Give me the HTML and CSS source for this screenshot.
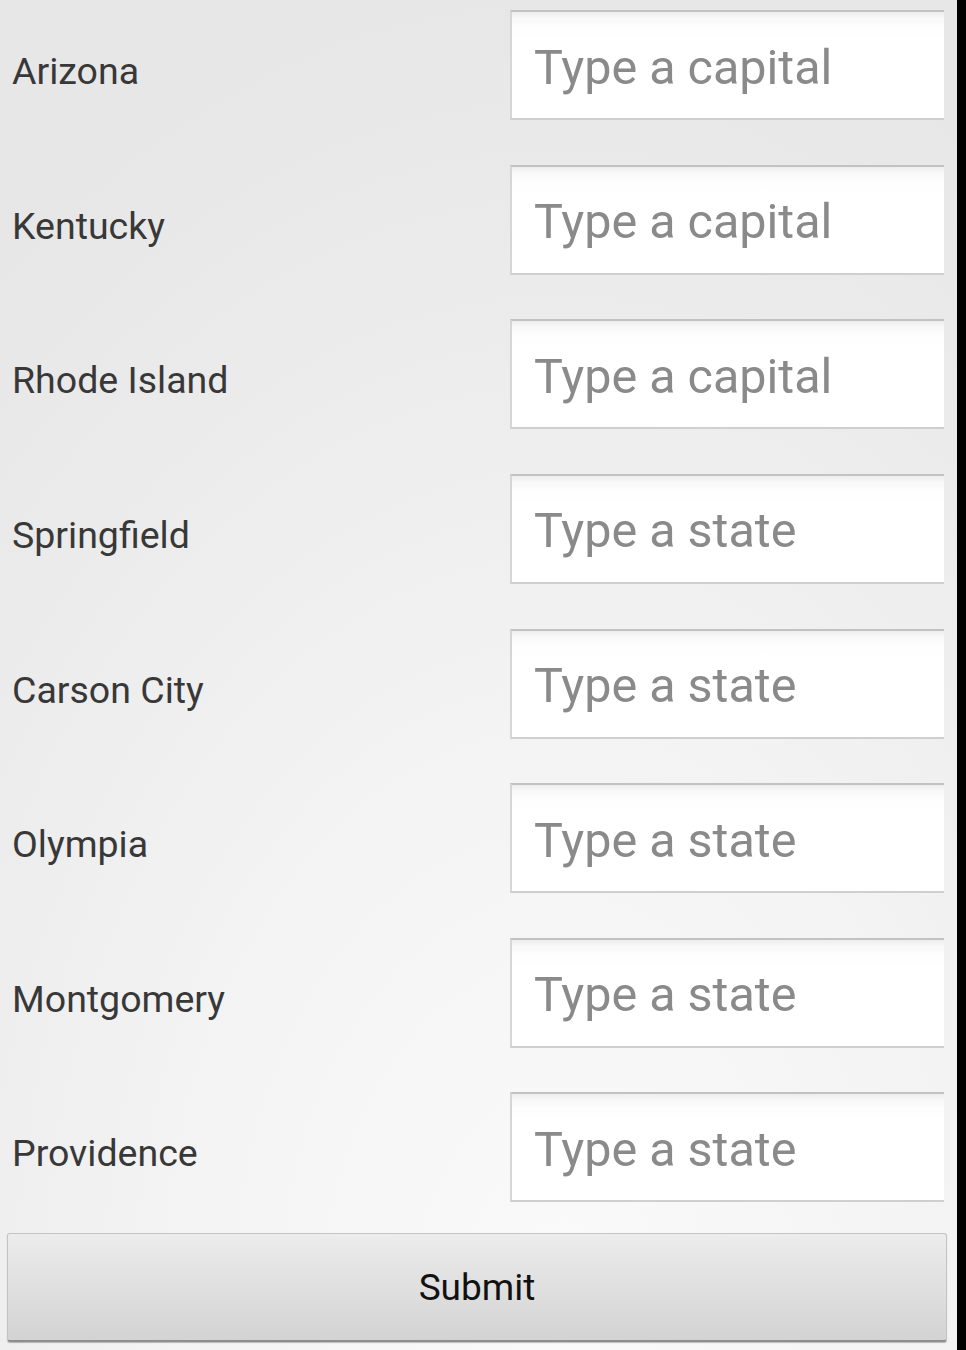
FILE: index.html
```html
<!DOCTYPE html>
<html>
<head>
<meta charset="utf-8">
<link rel="stylesheet" href="styles.css">
</head>
<body>
<div class="device">
  <div class="screen">
    <form class="quiz">
      <div class="row"><label class="name">Arizona</label><input class="field" type="text" placeholder="Type a capital"></div>
      <div class="row"><label class="name">Kentucky</label><input class="field" type="text" placeholder="Type a capital"></div>
      <div class="row"><label class="name">Rhode Island</label><input class="field" type="text" placeholder="Type a capital"></div>
      <div class="row"><label class="name">Springfield</label><input class="field" type="text" placeholder="Type a state"></div>
      <div class="row"><label class="name">Carson City</label><input class="field" type="text" placeholder="Type a state"></div>
      <div class="row"><label class="name">Olympia</label><input class="field" type="text" placeholder="Type a state"></div>
      <div class="row"><label class="name">Montgomery</label><input class="field" type="text" placeholder="Type a state"></div>
      <div class="row"><label class="name">Providence</label><input class="field" type="text" placeholder="Type a state"></div>
      <button class="submit" type="button">Submit</button>
    </form>
  </div>
  <div class="edge"></div>
</div>
</body>
</html>
```
FILE: styles.css
```css
html, body {
  margin: 0;
  padding: 0;
}
body {
  width: 966px;
  height: 1350px;
  overflow: hidden;
  font-family: Roboto, "Liberation Sans", sans-serif;
}
.device {
  display: flex;
  width: 966px;
  height: 1350px;
}
.screen {
  width: 957px;
  height: 1350px;
  background: radial-gradient(ellipse 900px 1300px at 560px 1300px, #fafafa 0%, #f4f4f4 40%, #ececec 75%, #e7e7e7 100%);
}
.edge {
  width: 9px;
  height: 1350px;
  background: #000;
}
.quiz {
  display: flex;
  flex-direction: column;
  padding: 10px 0 0 0;
}
.row {
  display: flex;
  align-items: center;
  height: 110px;
  margin-bottom: 44.65px;
}
.row:nth-last-of-type(1) {
  margin-bottom: 0;
}
.name {
  width: 510px;
  box-sizing: border-box;
  padding: 12px 0 0 12px;
  font-size: 37.5px;
  line-height: 44px;
  color: #383838;
}
.field {
  box-sizing: border-box;
  width: 434px;
  height: 110px;
  margin: 0;
  padding: 4px 0 0 22px;
  border: none;
  border-top: 2px solid #c2c2c2;
  border-left: 2px solid #d6d6d6;
  border-bottom: 2px solid #cfcfcf;
  border-radius: 0;
  background: linear-gradient(#ededed 0px, #f8f8f8 6px, #fdfdfd 14px, #fff 30px);
  font-family: Roboto, "Liberation Sans", sans-serif;
  font-size: 48.5px;
  color: #333;
  outline: none;
}
.field::placeholder {
  color: #8a8a8a;
  opacity: 1;
}
.submit {
  margin: 31px 0 0 7px;
  width: 940px;
  height: 109px;
  box-sizing: border-box;
  border: 1px solid #c4c4c4;
  border-bottom: 2px solid #8e8e8e;
  border-radius: 3px;
  background: linear-gradient(#ececec, #d3d3d3);
  box-shadow: 0 1px 1px rgba(0,0,0,0.25);
  font-family: Roboto, "Liberation Sans", sans-serif;
  font-size: 37px;
  color: #111;
  padding: 0;
}
```
